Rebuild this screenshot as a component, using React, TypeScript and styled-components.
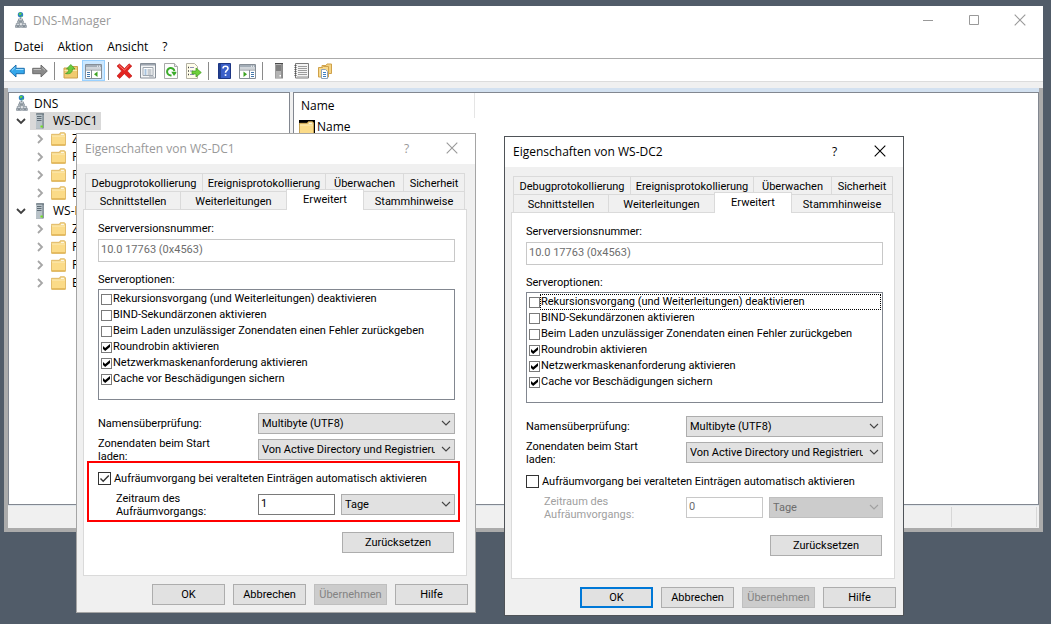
import React, { useId } from "react";
import styled, { createGlobalStyle, css } from "styled-components";

const uiFont = `"Open Sans", "Noto Sans", sans-serif`;
const dialogFont = `Roboto, "Liberation Sans", sans-serif`;

const GlobalStyle = createGlobalStyle`
  *, *::before, *::after { box-sizing: border-box; }
  body { margin: 0; background: #515c69; font-family: ${uiFont}; font-size: 12px; color: #000; }
  button, input, select { font: inherit; color: inherit; margin: 0; }
`;

/* ---------- console window ---------- */

const Desktop = styled.div`
  position: relative;
  min-height: 100vh;
  padding: 6px 8px 92px 4px;
  display: flex;
  flex-direction: column;
  overflow: hidden;
`;

const ConsoleWindow = styled.main`
  flex: 1;
  display: flex;
  flex-direction: column;
  background: #fff;
`;

const TitleBar = styled.header`
  display: flex;
  align-items: center;
  height: 30px;
  padding: 0 0 2px 11px;
  color: #999;
`;

const WindowTitle = styled.h1`
  flex: 1;
  margin: 0 0 0 6px;
  font-size: 12px;
  font-weight: 400;
`;

const WindowControl = styled.button`
  display: grid;
  place-items: center;
  width: 46px;
  height: 28px;
  padding: 0;
  border: 0;
  background: none;
  color: #999;
`;

const MenuBar = styled.nav`
  display: flex;
  height: 23px;
  padding: 0 3px 2px;
  border-bottom: 1px solid #ababab;
`;

const MenuButton = styled.button`
  padding: 0 7px;
  border: 0;
  background: none;
`;

const Toolbar = styled.div`
  display: flex;
  align-items: center;
  height: 23px;
  padding: 1px 0 0 1px;
  border-bottom: 1px solid #dcdcdc;
`;

const ToolButton = styled.button<{ $active?: boolean }>`
  display: grid;
  place-items: center;
  width: 23px;
  height: 21px;
  padding: 1px 0 0;
  border: 1px solid ${(p) => (p.$active ? "#99d1ff" : "transparent")};
  background: ${(p) => (p.$active ? "#cce8ff" : "none")};
`;

const ToolSeparator = styled.span`
  width: 1px;
  height: 18px;
  margin: 0 4px 0 3px;
  background: #8a8a8a;
`;

const ToolbarEdge = styled.div`
  height: 6px;
  background: #f0f0f0;
`;

const Frame = styled.div`
  flex: 1;
  display: flex;
  flex-direction: column;
  border: 4px solid #ababab;
  border-top: 0;
  background: #f0f0f0;
`;

const Panes = styled.div`
  flex: 1;
  display: grid;
  grid-template-columns: 282px 1fr;
  gap: 3px;
  border-top: 4px solid #d3e1f0;
  border-bottom: 1px solid #dfe5ea;
`;

const Pane = styled.section`
  min-width: 0;
  border: 1px solid #828790;
  background: #fff;
`;

const StatusBar = styled.footer`
  display: flex;
  justify-content: flex-end;
  height: 22px;
  padding: 1px 2px 1px 0;
`;

const StatusCell = styled.span`
  width: 86px;
  border: solid #d7d7d7;
  border-width: 0 1px;
`;

/* ---------- tree ---------- */

const Tree = styled.ul`
  margin: 0;
  padding: 1px 0 0 6px;
  list-style: none;
`;

const Branch = styled.ul`
  margin: 0;
  padding: 0;
  list-style: none;
`;

const TreeRow = styled.div<{ $depth: number }>`
  display: flex;
  align-items: center;
  height: 18px;
  padding-left: ${(p) => p.$depth * 19}px;
`;

const Expander = styled.span`
  display: grid;
  place-items: center;
  width: 12px;
  margin-right: 3px;
`;

const TreeLabel = styled.span<{ $selected?: boolean }>`
  display: flex;
  align-items: center;
  gap: 8px;
  height: 18px;
  padding: 0 3px 0 5px;
  line-height: 16px;
  white-space: nowrap;
  background: ${(p) => (p.$selected ? "#d9d9d9" : "none")};
`;

const FolderLabel = styled(TreeLabel)`
  gap: 6px;
  padding-left: 2px;
`;

const RootLabel = styled.span`
  display: flex;
  align-items: center;
  gap: 6px;
  padding-left: 1px;
`;

/* ---------- name list ---------- */

const ListTable = styled.table`
  width: 181px;
  border-collapse: collapse;
  text-align: left;
  th {
    height: 25px;
    padding: 0 7px;
    font-weight: 400;
    border-right: 1px solid #e5e5e5;
  }
  td {
    padding: 1px 5px 0;
    height: 16px;
  }
`;

const ListItem = styled.span`
  display: flex;
  align-items: center;
  gap: 2px;
  line-height: 16px;
`;

const IconPlate = styled.span`
  display: grid;
  padding: 1px 1px 0 0;
  background: #000;
`;

/* ---------- dialog ---------- */

const Dialog = styled.section<{ $x: number; $y: number; $active: boolean }>`
  position: absolute;
  left: ${(p) => p.$x}px;
  top: ${(p) => p.$y}px;
  width: 400px;
  display: flex;
  flex-direction: column;
  border: 1px solid ${(p) => (p.$active ? "#4f5358" : "#a5a5a5")};
  background: #f0f0f0;
  font-family: ${dialogFont};
  font-size: 11px;
  line-height: 13px;
`;

const DialogHeader = styled.header<{ $active: boolean }>`
  display: flex;
  align-items: center;
  height: 30px;
  padding: 0 1px 2px 8px;
  background: #fff;
  color: ${(p) => (p.$active ? "#000" : "#999")};
  font-family: ${uiFont};
  font-size: 12px;
`;

const DialogTitle = styled.h2`
  flex: 1;
  margin: 0;
  font-size: 12px;
  font-weight: 400;
`;

const DialogControl = styled.button`
  display: grid;
  place-items: center;
  width: 45px;
  height: 28px;
  padding: 0;
  border: 0;
  background: none;
`;

const TabRows = styled.div`
  padding: 9px 0 0 8px;
`;

const TabRow = styled.div<{ $columns: string }>`
  display: grid;
  grid-template-columns: ${(p) => p.$columns};
  width: 380px;
  height: 18px;
  border-left: 1px solid #dadada;
`;

const Tab = styled.button<{ $active?: boolean }>`
  padding: 1px 0 0;
  border: solid #dadada;
  border-width: 1px 1px 0 0;
  background: #f0f0f0;
  white-space: nowrap;
  ${(p) =>
    p.$active &&
    css`
      position: relative;
      margin: -2px 0 -1px -1px;
      padding-bottom: 3px;
      border-left-width: 1px;
      background: #fff;
    `}
`;

const TabPanel = styled.div`
  display: flex;
  flex-direction: column;
  width: 384px;
  height: 367px;
  margin-left: 6px;
  padding: 12px 11px 0 14px;
  border: 1px solid #dadada;
  background: #fff;
`;

const FieldLabel = styled.label`
  line-height: 14px;
`;

const ListCaption = styled.span`
  margin-top: 11px;
  line-height: 14px;
`;

const TextField = styled.input`
  height: 21px;
  min-width: 0;
  padding: 0 2px 2px;
  border: 1px solid #7a7a7a;
  border-radius: 0;
  background: #fff;
  &:disabled,
  &:read-only {
    border-color: #c8c8c8;
    color: #6d6d6d;
  }
`;

const VersionField = styled(TextField)`
  height: 23px;
  margin-top: 3px;
`;

const OptionList = styled.div`
  height: 111px;
  margin-top: 2px;
  padding: 1px;
  border: 1px solid #828790;
`;

const OptionRow = styled.label<{ $focused?: boolean }>`
  display: flex;
  align-items: center;
  height: 16px;
  padding-left: 1px;
  span:last-child {
    flex: 1;
    line-height: 14px;
    border: 1px dotted ${(p) => (p.$focused ? "#000" : "transparent")};
  }
`;

const CheckBox = styled.span<{ $size: number }>`
  position: relative;
  display: grid;
  width: ${(p) => p.$size}px;
  height: ${(p) => p.$size}px;
  input {
    appearance: none;
    width: 100%;
    height: 100%;
    border: 1px solid ${(p) => (p.$size > 11 ? "#333" : "#7a7a7a")};
    background: #fff;
  }
  svg {
    position: absolute;
    inset: 0;
    display: none;
    pointer-events: none;
  }
  input:checked + svg {
    display: block;
  }
`;

const SettingGrid = styled.div`
  display: grid;
  grid-template-columns: 160px 1fr;
  grid-auto-rows: 21px;
  row-gap: 5px;
  align-items: center;
  margin-top: 13px;
`;

const WrappedLabel = styled.label<{ $disabled?: boolean }>`
  width: 120px;
  color: ${(p) => (p.$disabled ? "#a0a0a0" : "inherit")};
`;

const SelectBox = styled.span`
  position: relative;
  display: grid;
  min-width: 0;
  svg {
    position: absolute;
    right: 4px;
    top: 7px;
    pointer-events: none;
  }
`;

const Select = styled.select`
  appearance: none;
  width: 100%;
  height: 21px;
  padding: 0 19px 0 3px;
  border: 1px solid #adadad;
  border-radius: 0;
  background: #e1e1e1;
  &:disabled {
    border-color: #bfbfbf;
    background: #ccc;
    color: #6d6d6d;
    opacity: 1;
  }
`;

const ScavengingGroup = styled.div<{ $marked: boolean }>`
  display: flex;
  flex-direction: column;
  height: 61px;
  margin: 1px -5px 0 -11px;
  padding: 8px 3px 0 9px;
  border: 2px solid ${(p) => (p.$marked ? "#f00" : "transparent")};
`;

const ScavengingToggle = styled.label`
  display: flex;
  align-items: center;
  gap: 3px;
  height: 15px;
`;

const PeriodRow = styled.div`
  display: grid;
  grid-template-columns: 136px 77px 1fr;
  grid-auto-rows: 21px;
  column-gap: 6px;
  align-items: center;
  margin-top: 8px;
  padding-left: 18px;
`;

const PushButton = styled.button<{ $default?: boolean }>`
  height: 21px;
  padding: 0;
  border: ${(p) => (p.$default ? "2px solid #0078d7" : "1px solid #adadad")};
  background: #e1e1e1;
  &:disabled {
    border-color: #bfbfbf;
    background: #ccc;
    color: #838383;
  }
`;

const ResetButton = styled(PushButton)`
  align-self: flex-end;
  width: 112px;
  margin: 10px 1px 0 0;
`;

const DialogFooter = styled.footer`
  display: grid;
  grid-template-columns: repeat(4, 73px);
  justify-content: end;
  gap: 8px;
  padding: 8px 7px 7px;
`;

/* ---------- drawings ---------- */

const CloseGlyph = () => (
  <svg width="12" height="12" viewBox="0 0 12 12" stroke="currentColor" strokeWidth="1.1">
    <path d="M.7.7l10.6 10.6M11.3.7L.7 11.3" />
  </svg>
);

const ChevronDown = ({ color = "#444" }: { color?: string }) => (
  <svg width="10" height="7" viewBox="0 0 10 7" fill="none" stroke={color} strokeWidth="1.1">
    <path d="M1 1l4 4 4-4" />
  </svg>
);

const ExpandedGlyph = () => (
  <svg width="10" height="7" viewBox="0 0 10 7" fill="none" stroke="#404040" strokeWidth="1.8">
    <path d="M1 1l4 4 4-4" />
  </svg>
);

const CollapsedGlyph = () => (
  <svg width="7" height="10" viewBox="0 0 7 10" fill="none" stroke="#a6a6a6" strokeWidth="1.8">
    <path d="M1 1l4 4-4 4" />
  </svg>
);

const SmallTick = () => (
  <svg width="11" height="11" viewBox="0 0 11 11" fill="#000">
    <path d="M2 4l2.200 2L9 2v3L4.200 9 2 7z" />
  </svg>
);

const LargeTick = () => (
  <svg width="13" height="13" viewBox="0 0 13 13" fill="none" stroke="#333" strokeWidth="1.4">
    <path d="M2.5 6.5l2.7 2.8 5.6-5.8" />
  </svg>
);

const DnsIcon = () => (
  <svg width="12" height="16" viewBox="0 0 12 16">
    <circle cx="5.500" cy="2.800" r="2.700" fill="#2a7ec6" />
    <path d="M3.600 1.600L5.500.500l1.300 1-.9 1.500-1.700.4zM6 4.200l1.700-.5-.7 1.200-1 .3z" fill="#5bd04c" />
    <path d="M5.500 5.500V7" stroke="#8a9299" />
    <g fill="#dfe4e8" stroke="#858f98" strokeWidth=".8">
      <path d="M3.500 6.900h4v2h-4zM2.600 8.900h5.800v1.900H2.600z" />
      <path d="M1.300 11.400h3.400v2H1.300zM.5 13.400h5v2h-5z" />
      <path d="M7.200 11.400h3.400v2H7.200zM6.400 13.400h5v2h-5z" />
    </g>
    <path d="M1.500 14.500h3M7.500 14.500h3M3.800 9.900h3.400" stroke="#5f6a74" strokeWidth=".7" />
  </svg>
);

const ServerIcon = () => (
  <svg width="10" height="16" viewBox="0 0 10 16">
    <path d="M1 1l1-.8h6.500L9 1v14l-.8.800H1z" fill="#8b979f" />
    <path d="M1 1h6.200v14.700H1z" fill="#b9c3c9" />
    <path d="M1 1h8M2 3.500h4.500M2 5.500h4.500M2 7.500h4.500" stroke="#55626b" strokeWidth=".9" />
    <path d="M5.500 12.500h2.300v2H5.500z" fill="#6fe01c" />
  </svg>
);

const ToolServerIcon = () => (
  <svg width="10" height="16" viewBox="0 0 10 16">
    <path d="M1 .5h8v15H1z" fill="#8a8a8a" />
    <path d="M1.500 1h5.700v14H1.500z" fill="#b4b4b4" />
    <path d="M1 .5h8M2 3h5M2 5h5M2 7h5" stroke="#4a4a4a" />
    <path d="M5.500 12h1.500v1.500H5.500z" fill="#fff" />
  </svg>
);

const FolderIcon = () => (
  <svg width="15" height="14" viewBox="0 0 15 14">
    <path d="M.5 3.500V2.300h7.800L9.300.700h4.200l1 1.200v11.400H.5z" fill="#f0cd74" stroke="#dcb35a" strokeWidth=".8" />
    <path d="M1 4.300h13v8.600H1z" fill="#fbdb88" />
    <path d="M1 4h13" stroke="#fff0bf" />
    <path d="M9.800 2.300h3.400" stroke="#fff" />
    <path d="M1 12.900h13" stroke="#d9a844" />
  </svg>
);

const ArrowIcon = ({ back }: { back?: boolean }) => (
  <svg width="16" height="14" viewBox="0 0 16 14">
    <path
      d={back ? "M.7 7L7 1v3.300h8.300v5.400H7V13z" : "M15.300 7L9 1v3.300H.7v5.400H9V13z"}
      fill={back ? "#35a7ea" : "#8a8a8a"}
      stroke={back ? "#1568a8" : "#666"}
      strokeWidth=".9"
      strokeLinejoin="round"
    />
    <path d={back ? "M3 6.300L6.300 3.300M7 5.500h7.500" : "M1.500 5.500H9M9.800 3.300L13 6.300"} stroke={back ? "#9bdcff" : "#bdbdbd"} fill="none" />
  </svg>
);

const FolderUpIcon = () => (
  <svg width="16" height="16" viewBox="0 0 16 16">
    <path d="M1 5h6l1-1.500h6.500V15H1z" fill="#f1cb70" stroke="#cda04d" />
    <path d="M1.500 7.500h12.500" stroke="#fde8ad" />
    <path d="M2.500 10.500c2.500-.8 3.200-2.200 3.200-4.500H3.500l4.300-4.500L12 6H9.500c0 3.500-2.500 5.500-7 4.500z" fill="#6ccb3f" stroke="#3f9a27" strokeWidth=".7" />
  </svg>
);

const PaneIcon = ({ right }: { right?: boolean }) => (
  <svg width="17" height="15" viewBox="0 0 17 15">
    <path d="M.5.500h16v14H.5z" fill="#fff" stroke="#868e96" />
    <path d="M1 1h15v2.500H1z" fill="#a3adb7" />
    <path d="M1 4.500h15" stroke="#c3c9cf" strokeWidth=".8" />
    <path d="M1 6h15" stroke="#868e96" />
    <path d="M12 2.200h1M14 2.200h1" stroke="#fff" />
    {right ? (
      <>
        <path d="M10.500 6v8.500" stroke="#868e96" />
        <path d="M12 8.500h3M12 10.500h3M12 12.500h3" stroke="#4477aa" />
        <path d="M4.500 7.500v5.600l3.500-2.800z" fill="#3da423" />
      </>
    ) : (
      <>
        <path d="M6.500 6v8.500" stroke="#868e96" />
        <path d="M2 8.500h3M2 10.500h3M2 12.500h3" stroke="#4477aa" />
        <path d="M12.500 7.500v5.600L9 10.300z" fill="#3da423" />
      </>
    )}
  </svg>
);

const DeleteIcon = () => (
  <svg width="17" height="16" viewBox="0 0 17 16">
    <path d="M1 3l2.500-2 5 4.500L13 .8 15.800 3l-4.500 5 4.700 5-2.800 2.300-4.900-4.600L3.700 15.500 1 13l4.600-5z" fill="#e3231f" stroke="#b81a18" strokeWidth=".6" />
    <path d="M3 2.500l5.500 4.700L13 2.300" stroke="#f77b74" fill="none" />
  </svg>
);

const PropertiesIcon = () => (
  <svg width="16" height="16" viewBox="0 0 16 16">
    <path d="M.5.500h15v14.500H.5z" fill="#f5f6f7" stroke="#868e97" />
    <path d="M1 1.800h14" stroke="#9aa3ad" strokeWidth="1.500" />
    <path d="M3 4.500h10v8H3z" fill="#fff" stroke="#9ea6ae" />
    <path d="M4.500 7h2M4.500 9h2M4.500 11h2" stroke="#4e86bd" />
    <path d="M7.500 7h4M7.500 9h4M7.500 11h4" stroke="#8f98a1" />
    <path d="M9 13.800h5" stroke="#b0b6bc" />
  </svg>
);

const RefreshIcon = () => (
  <svg width="14" height="16" viewBox="0 0 14 16">
    <path d="M.5.500h10l3 3v12H.5z" fill="#fdfdfd" stroke="#a8a8a8" />
    <path d="M10.500.500v3h3" fill="#e8e8e8" stroke="#a8a8a8" />
    <path d="M7.500 12.300A3.700 3.700 0 1 1 10.400 8" fill="none" stroke="#3bab2a" strokeWidth="2" />
    <path d="M7.300 8.700h5v1.200l-2.300 3z" fill="#3bab2a" />
  </svg>
);

const ExportIcon = () => (
  <svg width="17" height="16" viewBox="0 0 17 16">
    <path d="M1.500.500h8l3 3v12h-11z" fill="#fffdea" stroke="#b3b1a2" />
    <path d="M3 4.500h1M3 8h1M3 11.500h1" stroke="#444" strokeWidth="1.300" />
    <path d="M5 4.500h4M5 8h3M5 11.500h4" stroke="#8d8fb8" />
    <path d="M7 8h4V5l5.300 4.500L11 14v-3H7z" fill="#6ed03a" stroke="#3f9a20" strokeWidth=".7" />
  </svg>
);

const HelpIcon = () => (
  <svg width="13" height="16" viewBox="0 0 13 16">
    <path d="M.5.500h12v15H.5z" fill="#3a5fc8" stroke="#1d3684" />
    <path d="M1 1h2v14H1z" fill="#23408f" />
    <path d="M5 5.500C5 2.500 10 2.500 10 5.500c0 2-2.500 2-2.500 4.300" fill="none" stroke="#fff" strokeWidth="1.600" />
    <path d="M6.700 11.200h1.700v1.700H6.700z" fill="#fff" />
  </svg>
);

const NotebookIcon = () => (
  <svg width="15" height="16" viewBox="0 0 15 16">
    <path d="M1.500.500h13v14.500h-13z" fill="#f4f4f4" stroke="#7b7b7b" />
    <path d="M4 3.500h9M4 5.500h9M4 7.500h9M4 9.500h9M4 11.500h9" stroke="#9c9c9c" />
    <path d="M3 13.500h11" stroke="#c4c4c4" />
    <path d="M.5 2.500h2M.5 4.500h2M.5 6.500h2M.5 8.500h2M.5 10.500h2M.5 12.500h2" stroke="#555" />
  </svg>
);

const FolderDocIcon = () => (
  <svg width="16" height="16" viewBox="0 0 16 16">
    <path d="M5 2.500h4L10 1h4.500v9.500H5z" fill="#f5d485" stroke="#cfa14a" />
    <path d="M1.500 4.500h4l1-1h5V14h-10z" fill="#f7d98e" stroke="#cfa14a" />
    <path d="M4.500 6.500h4l2 2v7h-6z" fill="#fff" stroke="#8fa4bb" />
    <path d="M6 9.500h3M6 11.500h3M6 13.500h3" stroke="#3d7fc4" />
  </svg>
);

/* ---------- content ---------- */

const serverOptions = [
  { label: "Rekursionsvorgang (und Weiterleitungen) deaktivieren", on: false },
  { label: "BIND-Sekundärzonen aktivieren", on: false },
  { label: "Beim Laden unzulässiger Zonendaten einen Fehler zurückgeben", on: false },
  { label: "Roundrobin aktivieren", on: true },
  { label: "Netzwerkmaskenanforderung aktivieren", on: true },
  { label: "Cache vor Beschädigungen sichern", on: true },
];

const zoneFolders = ["Z", "F", "R", "B"];

function ServerBranch({ name, selected }: { name: string; selected?: boolean }) {
  return (
    <li>
      <TreeRow $depth={0}>
        <Expander><ExpandedGlyph /></Expander>
        <TreeLabel $selected={selected}><ServerIcon />{name}</TreeLabel>
      </TreeRow>
      <Branch>
        {zoneFolders.map((zone) => (
          <li key={zone}>
            <TreeRow $depth={1}>
              <Expander><CollapsedGlyph /></Expander>
              <FolderLabel><FolderIcon />{zone}</FolderLabel>
            </TreeRow>
          </li>
        ))}
      </Branch>
    </li>
  );
}

interface PropertiesProps {
  server: string;
  x: number;
  y: number;
  active: boolean;
  scavenging: boolean;
  period: string;
}

function PropertiesDialog({ server, x, y, active, scavenging, period }: PropertiesProps) {
  const id = useId();
  return (
    <Dialog $x={x} $y={y} $active={active} role="dialog" aria-labelledby={`${id}-title`}>
      <DialogHeader $active={active}>
        <DialogTitle id={`${id}-title`}>Eigenschaften von {server}</DialogTitle>
        <DialogControl>?</DialogControl>
        <DialogControl aria-label="Schließen"><CloseGlyph /></DialogControl>
      </DialogHeader>

      <TabRows role="tablist">
        <TabRow $columns="117px 123px 78px 1fr">
          <Tab role="tab">Debugprotokollierung</Tab>
          <Tab role="tab">Ereignisprotokollierung</Tab>
          <Tab role="tab">Überwachen</Tab>
          <Tab role="tab">Sicherheit</Tab>
        </TabRow>
        <TabRow $columns="95px 106px 77px 1fr">
          <Tab role="tab">Schnittstellen</Tab>
          <Tab role="tab">Weiterleitungen</Tab>
          <Tab role="tab" aria-selected $active>Erweitert</Tab>
          <Tab role="tab">Stammhinweise</Tab>
        </TabRow>
      </TabRows>

      <TabPanel role="tabpanel">
        <FieldLabel htmlFor={`${id}-version`}>Serverversionsnummer:</FieldLabel>
        <VersionField id={`${id}-version`} readOnly defaultValue="10.0 17763 (0x4563)" />

        <ListCaption id={`${id}-options`}>Serveroptionen:</ListCaption>
        <OptionList role="group" aria-labelledby={`${id}-options`}>
          {serverOptions.map((option, index) => (
            <OptionRow key={option.label} $focused={active && index === 0}>
              <CheckBox $size={11}>
                <input type="checkbox" defaultChecked={option.on} />
                <SmallTick />
              </CheckBox>
              <span>{option.label}</span>
            </OptionRow>
          ))}
        </OptionList>

        <SettingGrid>
          <FieldLabel htmlFor={`${id}-names`}>Namensüberprüfung:</FieldLabel>
          <SelectBox>
            <Select id={`${id}-names`}><option>Multibyte (UTF8)</option></Select>
            <ChevronDown />
          </SelectBox>
          <WrappedLabel htmlFor={`${id}-load`}>Zonendaten beim Start laden:</WrappedLabel>
          <SelectBox>
            <Select id={`${id}-load`}><option>Von Active Directory und Registrierung</option></Select>
            <ChevronDown />
          </SelectBox>
        </SettingGrid>

        <ScavengingGroup $marked={scavenging}>
          <ScavengingToggle>
            <CheckBox $size={13}>
              <input type="checkbox" defaultChecked={scavenging} />
              <LargeTick />
            </CheckBox>
            Aufräumvorgang bei veralteten Einträgen automatisch aktivieren
          </ScavengingToggle>
          <PeriodRow>
            <WrappedLabel htmlFor={`${id}-period`} $disabled={!scavenging}>
              Zeitraum des Aufräumvorgangs:
            </WrappedLabel>
            <TextField id={`${id}-period`} defaultValue={period} disabled={!scavenging} />
            <SelectBox>
              <Select aria-label="Einheit" disabled={!scavenging}><option>Tage</option></Select>
              <ChevronDown color={scavenging ? "#444" : "#a0a0a0"} />
            </SelectBox>
          </PeriodRow>
        </ScavengingGroup>

        <ResetButton>Zurücksetzen</ResetButton>
      </TabPanel>

      <DialogFooter>
        <PushButton $default={active}>OK</PushButton>
        <PushButton>Abbrechen</PushButton>
        <PushButton disabled>Übernehmen</PushButton>
        <PushButton>Hilfe</PushButton>
      </DialogFooter>
    </Dialog>
  );
}

export default function App() {
  return (
    <Desktop>
      <GlobalStyle />
      <ConsoleWindow>
        <TitleBar>
          <DnsIcon />
          <WindowTitle>DNS-Manager</WindowTitle>
          <WindowControl aria-label="Minimieren">
            <svg width="10" height="10" viewBox="0 0 10 10" stroke="currentColor"><path d="M0 5.500h10" /></svg>
          </WindowControl>
          <WindowControl aria-label="Maximieren">
            <svg width="10" height="10" viewBox="0 0 10 10" stroke="currentColor" fill="none"><path d="M.5.500h9v9h-9z" /></svg>
          </WindowControl>
          <WindowControl aria-label="Schließen"><CloseGlyph /></WindowControl>
        </TitleBar>

        <MenuBar>
          <MenuButton>Datei</MenuButton>
          <MenuButton>Aktion</MenuButton>
          <MenuButton>Ansicht</MenuButton>
          <MenuButton>?</MenuButton>
        </MenuBar>

        <Toolbar role="toolbar">
          <ToolButton aria-label="Zurück"><ArrowIcon back /></ToolButton>
          <ToolButton aria-label="Vorwärts"><ArrowIcon /></ToolButton>
          <ToolSeparator />
          <ToolButton aria-label="Eine Ebene nach oben"><FolderUpIcon /></ToolButton>
          <ToolButton aria-label="Konsolenstruktur" $active><PaneIcon /></ToolButton>
          <ToolSeparator />
          <ToolButton aria-label="Löschen"><DeleteIcon /></ToolButton>
          <ToolButton aria-label="Eigenschaften"><PropertiesIcon /></ToolButton>
          <ToolButton aria-label="Aktualisieren"><RefreshIcon /></ToolButton>
          <ToolButton aria-label="Liste exportieren"><ExportIcon /></ToolButton>
          <ToolSeparator />
          <ToolButton aria-label="Hilfe"><HelpIcon /></ToolButton>
          <ToolButton aria-label="Aktionsbereich"><PaneIcon right /></ToolButton>
          <ToolSeparator />
          <ToolButton aria-label="Server"><ToolServerIcon /></ToolButton>
          <ToolButton aria-label="Protokoll"><NotebookIcon /></ToolButton>
          <ToolButton aria-label="Neue Zone"><FolderDocIcon /></ToolButton>
        </Toolbar>
        <ToolbarEdge />

        <Frame>
          <Panes>
            <Pane>
              <Tree>
                <li>
                  <TreeRow $depth={0}>
                    <RootLabel><DnsIcon />DNS</RootLabel>
                  </TreeRow>
                </li>
                <ServerBranch name="WS-DC1" selected />
                <ServerBranch name="WS-DC2" />
              </Tree>
            </Pane>
            <Pane>
              <ListTable>
                <thead>
                  <tr><th>Name</th></tr>
                </thead>
                <tbody>
                  <tr>
                    <td><ListItem><IconPlate><FolderIcon /></IconPlate>Name</ListItem></td>
                  </tr>
                </tbody>
              </ListTable>
            </Pane>
          </Panes>
          <StatusBar><StatusCell /></StatusBar>
        </Frame>
      </ConsoleWindow>

      <PropertiesDialog server="WS-DC1" x={76} y={133} active={false} scavenging period="1" />
      <PropertiesDialog server="WS-DC2" x={504} y={136} active scavenging={false} period="0" />
    </Desktop>
  );
}
